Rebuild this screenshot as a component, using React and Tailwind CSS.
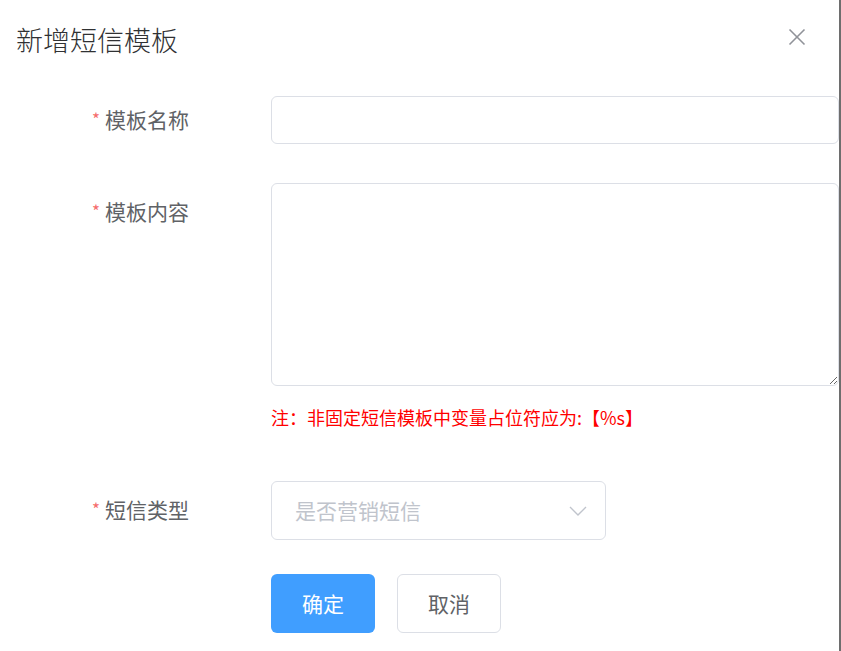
export default function App() {
  const font = { fontFamily: '"Noto Sans CJK SC", "Noto Sans", sans-serif' }

  const Label = ({ text, extra = '' }) => (
    <div className={`w-[271px] shrink-0 pl-[92px] flex items-start text-[21px] leading-[44px] text-[#606266] ${extra}`}>
      <span className="text-[#f56c6c] mr-[5px] text-[17px]">*</span>
      <span>{text}</span>
    </div>
  )

  return (
    <div className="flex w-[841px] h-[651px] overflow-hidden bg-white" style={font}>
      <div className="w-[839px] h-full bg-white flex flex-col">
        {/* header */}
        <div className="flex items-start justify-between pl-[16px] pt-[22px]">
          <h2 className="text-[27px] leading-[36px] text-[#303133] font-light">新增短信模板</h2>
          <button className="mr-[30px] mt-[3px] w-[24px] h-[24px] flex items-center justify-center text-[#909399]">
            <svg width="18" height="18" viewBox="0 0 18 18" fill="none" stroke="currentColor" strokeWidth="1.6">
              <line x1="1.5" y1="1.5" x2="16.5" y2="16.5" />
              <line x1="16.5" y1="1.5" x2="1.5" y2="16.5" />
            </svg>
          </button>
        </div>

        {/* 模板名称 */}
        <div className="flex mt-[38px]">
          <Label text="模板名称" extra="pt-[1px]" />
          <input className="w-[568px] h-[48px] border border-[#dcdfe6] rounded-[6px] outline-none px-[22px] text-[21px]" />
        </div>

        {/* 模板内容 */}
        <div className="flex mt-[39px]">
          <Label text="模板内容" extra="pt-[6px]" />
          <div className="flex flex-col">
            <textarea className="block w-[568px] h-[203px] border border-[#dcdfe6] rounded-[6px] outline-none resize-y px-[22px] py-[8px] text-[21px]" />
            <p className="mt-[18px] text-[18px] leading-[27px] text-[#ff0000]">注：非固定短信模板中变量占位符应为:【%s】</p>
          </div>
        </div>

        {/* 短信类型 */}
        <div className="flex mt-[50px] items-center">
          <Label text="短信类型" extra="-mt-[3px]" />
          <div className="w-[335px] h-[59px] border border-[#dcdfe6] rounded-[6px] flex items-center justify-between pl-[23px] pr-[18px]">
            <span className="text-[21px] text-[#c0c4cc]">是否营销短信</span>
            <svg width="18" height="10" viewBox="0 0 18 10" fill="none" stroke="#c0c4cc" strokeWidth="1.4">
              <polyline points="1,1 9,9 17,1" />
            </svg>
          </div>
        </div>

        {/* buttons */}
        <div className="flex mt-[34px] pl-[271px] gap-[22px]">
          <button className="w-[104px] h-[59px] rounded-[6px] bg-[#409eff] text-white text-[21px]">确定</button>
          <button className="w-[104px] h-[59px] rounded-[6px] border border-[#dcdfe6] bg-white text-[#606266] text-[21px]">取消</button>
        </div>
      </div>
      <div className="w-[2px] h-full bg-[#6e6e6e]" />
    </div>
  )
}
